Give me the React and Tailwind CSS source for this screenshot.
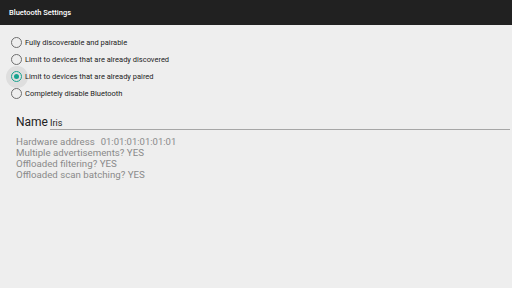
import React from "react";

const options = [
  "Fully discoverable and pairable",
  "Limit to devices that are already discovered",
  "Limit to devices that are already paired",
  "Completely disable Bluetooth",
];

function Radio({ checked }) {
  return (
    <div className="relative w-[11px] h-[11px] flex items-center justify-center">
      {checked && (
        <div className="absolute w-[22px] h-[22px] rounded-full bg-[#dedede] left-[-5.5px] top-[-5.5px]" />
      )}
      <div
        className={
          "relative w-[11px] h-[11px] rounded-full border-[1.5px] flex items-center justify-center " +
          (checked ? "border-[#17a38f]" : "border-[#6e6e6e]")
        }
      >
        {checked && <div className="w-[5px] h-[5px] rounded-full bg-[#17a38f]" />}
      </div>
    </div>
  );
}

export default function App() {
  return (
    <div
      className="w-[512px] h-[288px] bg-[#eeeeee] flex flex-col"
      style={{ fontFamily: "Roboto, 'Liberation Sans', sans-serif" }}
    >
      <div className="h-[25px] bg-[#212121] flex items-center pl-[9px]">
        <span className="text-white text-[7.5px] font-medium">Bluetooth Settings</span>
      </div>
      <div className="flex flex-col pt-[12px] pl-[11px] gap-[6px]">
        {options.map((o, i) => (
          <div key={i} className="flex items-center gap-[3px] h-[11px]">
            <Radio checked={i === 2} />
            <span className="relative text-[7.5px] text-[#222222] leading-none">{o}</span>
          </div>
        ))}
      </div>
      <div className="flex items-baseline pl-[16px] pr-[2px] mt-[16px]">
        <span className="text-[12px] text-[#222222] leading-[12px]">Name</span>
        <div className="flex-1 ml-[2px] border-b-[1.5px] border-[#a6a6a6] leading-[12px]">
          <span className="text-[9px] text-[#222222] leading-[12px]">Iris</span>
        </div>
      </div>
      <div className="flex flex-col pl-[16px] mt-[6px] text-[9.7px] text-[#8a8a8a] leading-[11px]">
        <div className="flex items-baseline">
          <span>Hardware address</span>
          <span className="ml-[6px] text-[9.5px]">01:01:01:01:01:01</span>
        </div>
        <span>Multiple advertisements? YES</span>
        <span>Offloaded filtering? YES</span>
        <span>Offloaded scan batching? YES</span>
      </div>
    </div>
  );
}
